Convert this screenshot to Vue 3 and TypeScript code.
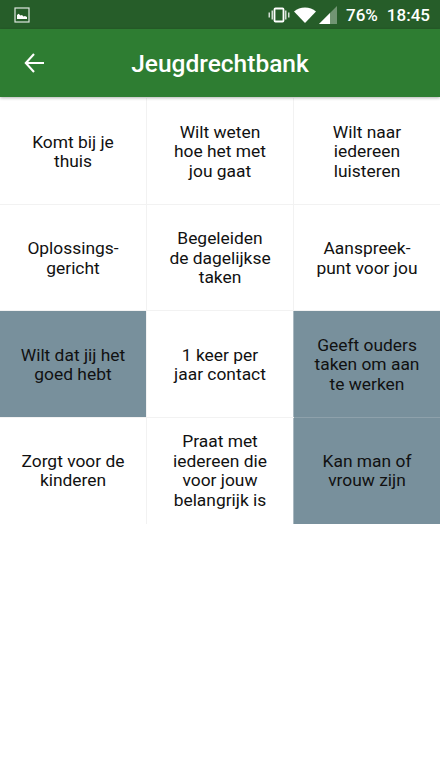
<script setup lang="ts">
interface Cell { text: string[]; on?: boolean }
const cells: Cell[] = [
  { text: ['Komt bij je', 'thuis'] },
  { text: ['Wilt weten', 'hoe het met', 'jou gaat'] },
  { text: ['Wilt naar', 'iedereen', 'luisteren'] },
  { text: ['Oplossings-', 'gericht'] },
  { text: ['Begeleiden', 'de dagelijkse', 'taken'] },
  { text: ['Aanspreek-', 'punt voor jou'] },
  { text: ['Wilt dat jij het', 'goed hebt'], on: true },
  { text: ['1 keer per', 'jaar contact'] },
  { text: ['Geeft ouders', 'taken om aan', 'te werken'], on: true },
  { text: ['Zorgt voor de', 'kinderen'] },
  { text: ['Praat met', 'iedereen die', 'voor jouw', 'belangrijk is'] },
  { text: ['Kan man of', 'vrouw zijn'], on: true },
]
</script>

<template>
  <div class="screen">
    <header class="status">
      <svg class="pic" width="16" height="16" viewBox="0 0 16 16">
        <rect x="1" y="1" width="14" height="14" fill="none" stroke="#fff" stroke-opacity=".85" stroke-width="1.2" />
        <path d="M3 12V8l1.600-1.200L6.500 8.500 8 8l1.500 1.500 1.500-.5 2 1v2z" fill="#fff" />
      </svg>
      <div class="status-right">
        <svg width="24" height="16" viewBox="0 0 24 16">
          <rect x="7.500" y="1.500" width="9" height="13" rx="1" fill="none" stroke="#fff" stroke-width="1.800" />
          <path d="M4.500 3.500h1.500v9H4.500zM18 3.500h1.500v9H18zM1.500 5.500H3v5H1.500zM21 5.500h1.500v5H21z" fill="#fff" fill-opacity=".8" />
        </svg>
        <svg class="wifi" width="22" height="16" viewBox="0 0 22 16">
          <path d="M0 4.500C3 2 6.800.500 11 .500s8 1.500 11 4L11 16z" fill="#fff" />
        </svg>
        <svg class="signal" width="18" height="18" viewBox="0 0 18 18">
          <path d="M0 18 18 0v18z" fill="#fff" fill-opacity=".35" />
          <path d="M0 18 11 7v11z" fill="#fff" />
        </svg>
        <span class="battery">76%</span>
        <span class="time">18:45</span>
      </div>
    </header>
    <nav class="toolbar">
      <svg class="back" width="24" height="24" viewBox="0 0 24 24">
        <path d="M21 12H3M11 3 2.800 12l8.200 9" fill="none" stroke="#fff" stroke-width="2.100" />
      </svg>
      <h1 class="title">Jeugdrechtbank</h1>
    </nav>
    <main class="grid">
      <div v-for="(cell, i) in cells" :key="i" class="cell" :class="{ on: cell.on }">
        <span v-for="line in cell.text" :key="line" class="line">{{ line }}</span>
      </div>
    </main>
  </div>
</template>

<style>
html, body { margin: 0; background: #fff; }
</style>

<style scoped>
.screen {
  width: 440px;
  height: 782px;
  background: #fff;
  overflow: hidden;
  font-family: Roboto, "Liberation Sans", sans-serif;
  color: #111;
}
.status {
  height: 29px;
  background: #265d29;
  display: flex;
  align-items: center;
  justify-content: space-between;
  padding: 0 10px 0 14px;
  box-sizing: border-box;
  color: #fff;
}
.pic { display: block; }
.status-right { display: flex; align-items: center; }
.wifi { margin-left: 3px; }
.signal { margin-left: 3px; }
.battery { margin-left: 9px; font-size: 17px; font-weight: 500; }
.time { margin-left: 9px; font-size: 17px; font-weight: 500; }
.toolbar {
  position: relative;
  z-index: 1;
  height: 68px;
  background: #2e7d32;
  display: flex;
  align-items: center;
  justify-content: center;
  box-shadow: 0 1px 3px rgba(0, 0, 0, 0.3);
}
.back { position: absolute; left: 23px; top: 22px; }
.title {
  margin: 0;
  font-size: 24.500px;
  font-weight: 500;
  color: #fff;
}
.grid {
  margin-top: 1px;
  display: grid;
  grid-template-columns: 146px 146px 146px;
  grid-template-rows: 106px 105px 106px 106px;
  gap: 1px;
  background: #f2f2f2;
  width: 440px;
}
.cell {
  background: #fff;
  display: flex;
  flex-direction: column;
  align-items: center;
  justify-content: center;
  padding-top: 2px;
  box-sizing: border-box;
  font-size: 17.400px;
  line-height: 19.500px;
  text-align: center;
}
.cell:nth-child(n + 10) { padding-top: 0; }
.cell.on {
  background: #78909c;
  box-shadow: -1px 0 0 #a9b8c0;
}
.cell.on:nth-child(9) { box-shadow: 0 1px 0 #8ea1ab, -1px 0 0 #a9b8c0; }
.line { display: block; white-space: nowrap; }
</style>
